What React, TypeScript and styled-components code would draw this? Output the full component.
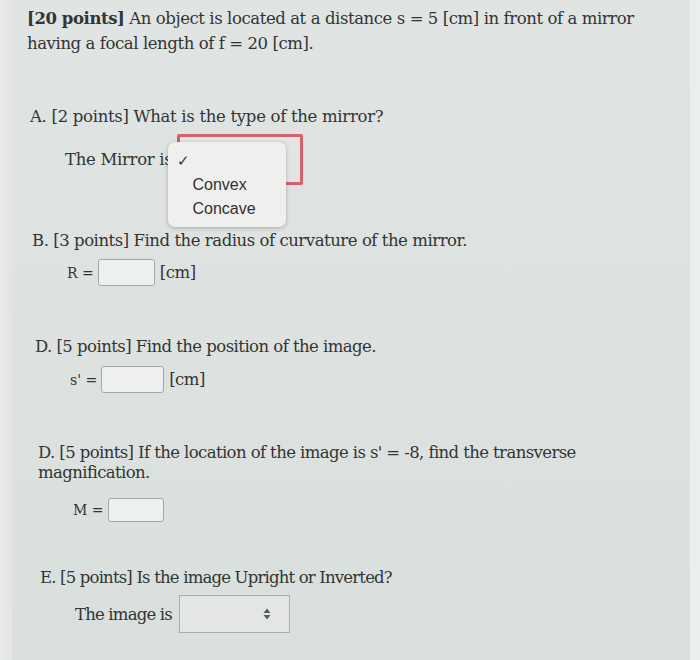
import React from "react";
import styled, { createGlobalStyle } from "styled-components";

const Global = createGlobalStyle`
  html, body { margin: 0; padding: 0; background: #e4e6e5; }
  #root { width: 700px; height: 660px; overflow: hidden; }
`;

const Screen = styled.div`
  position: relative;
  width: 700px;
  height: 660px;
  display: flex;
  background: #e9eae8;
`;

const LeftStrip = styled.div`
  width: 12px;
  flex: none;
  background: linear-gradient(90deg, #ebebe9, #e2e5e3);
`;

const Page = styled.div`
  flex: 1;
  padding: 6px 0 0 15px;
  background: linear-gradient(180deg, #e0e4e2 0%, #dde2e0 60%, #d9dfdc 100%);
  font-family: "DejaVu Serif", "Liberation Serif", serif;
  font-size: 16.5px;
  letter-spacing: -0.3px;
  color: #323534;
`;

const RightStrip = styled.div`
  width: 10px;
  flex: none;
  background: #eceded;
`;

const Header = styled.p`
  margin: 0;
  line-height: 25px;
  font-size: 16.5px;
  letter-spacing: -0.42px;
`;

const Bold = styled.b`
  font-weight: bold;
`;

const Question = styled.div<{ $shift: number; $top: number; $ls: number }>`
  margin-top: ${(p) => p.$top}px;
  padding-left: ${(p) => p.$shift}px;
  letter-spacing: ${(p) => p.$ls}px;
`;

const Title = styled.p<{ $lh?: number }>`
  margin: 0;
  line-height: ${(p) => p.$lh ?? 25}px;
`;

const Row = styled.div<{ $top: number }>`
  display: flex;
  align-items: center;
  margin-top: ${(p) => p.$top}px;
  padding-left: 35px;
`;

const Label = styled.span<{ $gap?: number }>`
  margin-right: ${(p) => p.$gap ?? 4}px;
`;

const MathLabel = styled.span`
  font-family: "DejaVu Serif", serif;
  font-size: 14px;
  letter-spacing: 0;
  margin-right: 4px;
`;

const Input = styled.div<{ $w: number; $h: number }>`
  width: ${(p) => p.$w}px;
  height: ${(p) => p.$h}px;
  box-sizing: border-box;
  border: 1px solid #a3a7a5;
  border-radius: 3px;
  background: #eef0ef;
`;

const Unit = styled.span`
  margin-left: 5px;
`;

const SelectWrap = styled.div`
  position: relative;
`;

const RedSelect = styled.div`
  width: 126px;
  height: 51px;
  box-sizing: border-box;
  border: 3px solid #d6606c;
  border-radius: 2px;
  background: #e2e5e3;
`;

const Popup = styled.div`
  position: absolute;
  left: -9px;
  top: 8px;
  width: 118px;
  height: 85px;
  box-sizing: border-box;
  padding: 7px 0 0 0;
  border-radius: 7px;
  background: #efefee;
  box-shadow: 0 1px 4px rgba(0, 0, 0, 0.25);
  font-family: "Liberation Sans", Arial, sans-serif;
  font-size: 16px;
  letter-spacing: 0;
  color: #2f3231;
`;

const Option = styled.div`
  display: flex;
  align-items: center;
  height: 24px;
`;

const Check = styled.span`
  width: 25px;
  padding-left: 9px;
  box-sizing: border-box;
  font-size: 15px;
  color: #333;
`;

const NativeSelect = styled.div`
  width: 111px;
  height: 38px;
  box-sizing: border-box;
  border: 1px solid #a9adab;
  background: #e3e6e5;
  display: flex;
  align-items: center;
  justify-content: flex-end;
  padding-right: 18px;
`;

function Arrows() {
  return (
    <svg width="8" height="12" viewBox="0 0 8 12">
      <path d="M4 0.5 L7.5 5 H0.5 Z" fill="#5a5d5c" />
      <path d="M4 11.5 L7.5 7 H0.5 Z" fill="#5a5d5c" />
    </svg>
  );
}

export default function App() {
  return (
    <>
      <Global />
      <Screen>
        <LeftStrip />
        <Page>
          <Header>
            <Bold>[20 points]</Bold> An object is located at a distance s = 5 [cm] in front of a mirror
            <br />
            having a focal length of f = 20 [cm].
          </Header>

          <Question $shift={3} $top={48} $ls={-0.3}>
            <Title>A. [2 points] What is the type of the mirror?</Title>
            <Row $top={5}>
              <Label>The Mirror is</Label>
              <SelectWrap>
                <RedSelect />
                <Popup>
                  <Option>
                    <Check>✓</Check>
                  </Option>
                  <Option>
                    <Check />
                    Convex
                  </Option>
                  <Option>
                    <Check />
                    Concave
                  </Option>
                </Popup>
              </SelectWrap>
            </Row>
          </Question>

          <Question $shift={5} $top={43} $ls={-0.46}>
            <Title>B. [3 points] Find the radius of curvature of the mirror.</Title>
            <Row $top={6}>
              <MathLabel>R =</MathLabel>
              <Input $w={57} $h={27} />
              <Unit>[cm]</Unit>
            </Row>
          </Question>

          <Question $shift={8} $top={48} $ls={-0.55}>
            <Title>D. [5 points] Find the position of the image.</Title>
            <Row $top={7}>
              <MathLabel>s' =</MathLabel>
              <Input $w={63} $h={27} />
              <Unit>[cm]</Unit>
            </Row>
          </Question>

          <Question $shift={11} $top={50} $ls={-0.6}>
            <Title $lh={20}>
              D. [5 points] If the location of the image is s' = -8, find the transverse
              <br />
              magnification.
            </Title>
            <Row $top={15}>
              <MathLabel>M =</MathLabel>
              <Input $w={56} $h={24} />
            </Row>
          </Question>

          <Question $shift={13} $top={43} $ls={-0.82}>
            <Title>E. [5 points] Is the image Upright or Inverted?</Title>
            <Row $top={5}>
              <Label $gap={7}>The image is</Label>
              <NativeSelect>
                <Arrows />
              </NativeSelect>
            </Row>
          </Question>
        </Page>
        <RightStrip />
      </Screen>
    </>
  );
}
